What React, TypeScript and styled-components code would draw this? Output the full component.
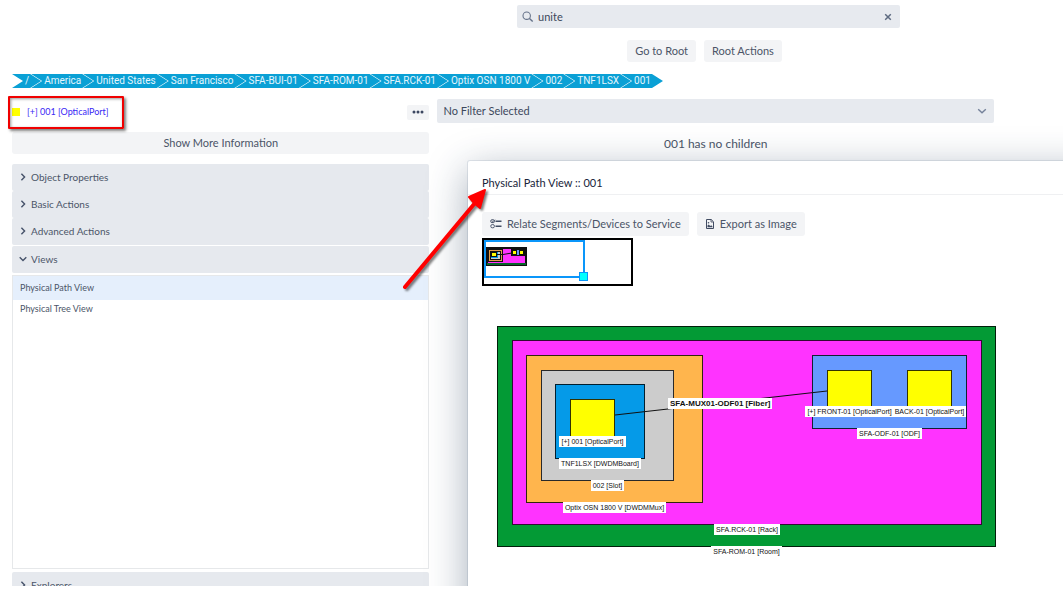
import React from "react";
import styled, { createGlobalStyle } from "styled-components";

const GlobalStyle = createGlobalStyle`
  * { box-sizing: border-box; }
  body {
    margin: 0;
    background: #fff;
    color: #4b5568;
    font-family: Lato, "Noto Sans", sans-serif;
    font-size: 12px;
    line-height: 16px;
  }
  button, input, select { font: inherit; color: inherit; }
  button { border: 0; padding: 0; background: none; cursor: pointer; }
  h2, p, ul, ol { margin: 0; padding: 0; font: inherit; list-style: none; }
`;

const Page = styled.div`
  height: 100vh;
  padding-bottom: 9px;
`;

const Workspace = styled.div`
  position: relative;
  height: 100%;
  overflow: hidden;
`;

const Header = styled.header`
  display: flex;
  flex-direction: column;
  align-items: center;
  gap: 12px;
  padding: 5px 0 0 354px;
`;

const SearchBox = styled.label`
  display: flex;
  align-items: center;
  gap: 4px;
  width: 54%;
  height: 23px;
  padding: 0 7px 0 5px;
  border-radius: 2px;
  background: #e7eaef;
`;

const SearchInput = styled.input`
  flex: 1;
  min-width: 0;
  border: 0;
  padding: 0;
  outline: 0;
  background: none;
  color: #3c485c;
  font-size: 11px;
`;

const IconButton = styled.button`
  display: flex;
  padding: 1px;
`;

const ButtonRow = styled.div`
  display: flex;
  gap: 8px;
`;

const RootActions = styled(ButtonRow)`
  padding-right: 8px;
`;

const Button = styled.button<{ $tall?: boolean }>`
  display: flex;
  align-items: center;
  justify-content: center;
  gap: 5px;
  height: ${(p) => (p.$tall ? 24 : 22)}px;
  padding: 0 8px;
  border-radius: 3px;
  background: #f3f4f6;
  font-size: 11px;
  white-space: nowrap;
`;

const Crumbs = styled.ol`
  display: flex;
  padding: 12px 12px 0;
`;

const Crumb = styled.a`
  display: block;
  height: 14px;
  margin-right: -10px;
  padding: 0 12px 0 13px;
  background: #0aa0d5;
  color: #e4f6fd;
  font-family: Roboto, "Noto Sans", sans-serif;
  font-size: 10px;
  line-height: 14px;
  text-decoration: none;
  white-space: nowrap;
  clip-path: polygon(0 0, calc(100% - 11px) 0, 100% 50%, calc(100% - 11px) 100%, 0 100%, 11px 50%);
`;

const Columns = styled.main`
  display: grid;
  grid-template-columns: 3fr 4fr;
  gap: 8px;
  padding: 11px 69px 0 12px;
`;

const Column = styled.section`
  display: flex;
  flex-direction: column;
  min-width: 0;
`;

const ObjectBar = styled.div`
  position: relative;
  display: flex;
  align-items: center;
  height: 26px;
`;

const Swatch = styled.span`
  width: 8px;
  height: 8px;
  margin-right: 7px;
  background: #ff0;
`;

const ObjectLink = styled.a`
  flex: 1;
  color: #3a28f5;
  font-size: 9px;
  text-decoration: none;
`;

const MoreButton = styled.button`
  display: flex;
  align-items: center;
  justify-content: center;
  width: 22px;
  height: 15px;
  border-radius: 2px;
  background: #f3f4f6;
`;

const Highlight = styled.div`
  position: absolute;
  left: -4px;
  top: -3px;
  width: 116px;
  height: 33px;
  border: 2px solid #f00000;
  border-radius: 1px;
  box-shadow: 2px 2px 3px rgba(0, 0, 0, 0.5), inset 1px 1px 3px rgba(0, 0, 0, 0.4);
  pointer-events: none;
`;

const Info = styled.div`
  padding: 7px 0 10px;
`;

const WideButton = styled(Button)`
  width: 100%;
`;

const Section = styled.button<{ $apart?: boolean }>`
  display: flex;
  align-items: center;
  gap: 4px;
  flex: none;
  height: 27px;
  margin-top: ${(p) => (p.$apart ? 1 : 0)}px;
  padding: 0 7px 1px;
  border-radius: 2px;
  background: #e6e9ee;
  font-size: 10px;
  text-align: left;
`;

const ViewList = styled.ul`
  flex: none;
  min-height: 294px;
  margin: 2px 0 3px;
  border: 1px solid #e6e8ea;
`;

const ViewItem = styled.button<{ $selected?: boolean }>`
  display: block;
  width: 100%;
  height: ${(p) => (p.$selected ? 24 : 18)}px;
  padding: 0 7px;
  background: ${(p) => (p.$selected ? "#e5effc" : "#fff")};
  font-size: 9px;
  text-align: left;
`;

const FilterField = styled.div`
  display: grid;
  align-items: center;
  height: 24px;
  border-radius: 2px;
  background: #e7eaef;
  & > * { grid-area: 1 / 1; }
  & > svg { justify-self: end; margin-right: 7px; pointer-events: none; }
`;

const FilterSelect = styled.select`
  width: 100%;
  height: 24px;
  padding: 0 6px;
  border: 0;
  outline: 0;
  appearance: none;
  background: none;
  color: #3c485c;
  font-size: 11px;
`;

const EmptyNote = styled.p`
  padding-top: 13px;
  text-align: center;
`;

const Dialog = styled.section`
  position: absolute;
  top: 161px;
  right: -60px;
  bottom: -60px;
  left: 468px;
  border-radius: 2px;
  background: #fff;
  box-shadow: 0 0 0 1px rgba(26, 57, 96, 0.1), 0 10px 40px rgba(26, 50, 80, 0.4);
`;

const DialogTitle = styled.h2`
  height: 34px;
  padding: 14px 14px 0;
  border-bottom: 1px solid #eff0f2;
  color: #18243a;
  font-size: 11px;
`;

const DialogBody = styled.div`
  padding: 17px 14px 0;
`;

const Overview = styled.div`
  position: relative;
  width: 151px;
  height: 48px;
  margin-top: 2px;
  padding: 7px 0 0 2px;
  border: 2px solid #000;
  & > svg { display: block; }
`;

const Viewport = styled.div`
  position: absolute;
  left: 0;
  top: 0;
  width: 101px;
  height: 38px;
  border: 2px solid #0a96fa;
  &::after {
    content: "";
    position: absolute;
    right: -5px;
    bottom: -5px;
    width: 7px;
    height: 7px;
    border: 1px solid #0a96fa;
    background: #0ff;
  }
`;

const Canvas = styled.div`
  position: relative;
  height: 290px;
  color: #111;
  font-family: "Liberation Sans", Arial, sans-serif;
  font-size: 7px;
  line-height: 11px;
`;

type Box = { x: number; y: number; w: number; h: number; fill: string; label: string };

const Node = styled.div<{ $box: Box }>`
  position: absolute;
  left: ${(p) => p.$box.x}px;
  top: ${(p) => p.$box.y}px;
  width: ${(p) => p.$box.w}px;
  height: ${(p) => p.$box.h}px;
  border: 1px solid rgba(0, 0, 0, 0.8);
  background: ${(p) => p.$box.fill};
`;

const NodeLabel = styled.div`
  position: absolute;
  top: 100%;
  left: -60px;
  right: -60px;
  display: flex;
  justify-content: center;
  white-space: nowrap;
  & > span { padding: 0 2px; background: #fff; }
`;

const Link = styled.svg`
  position: absolute;
  left: 0;
  top: 0;
`;

const LinkLabel = styled.span`
  position: absolute;
  left: 186px;
  top: 112px;
  padding: 0 2px;
  background: #fff;
  font-size: 8px;
  font-weight: bold;
  white-space: nowrap;
`;

const Arrow = styled.svg`
  position: absolute;
  left: 396px;
  top: 180px;
  filter: drop-shadow(2px 2px 1px rgba(0, 0, 0, 0.5));
  pointer-events: none;
`;

const crumbs = ["/", "America", "United States", "San Francisco", "SFA-BUI-01", "SFA-ROM-01", "SFA.RCK-01", "Optix OSN 1800 V", "002", "TNF1LSX", "001"];

const boxes: Box[] = [
  { x: 15, y: 40, w: 499, h: 221, fill: "#039a35", label: "SFA-ROM-01 [Room]" },
  { x: 30, y: 54, w: 470, h: 185, fill: "#ff33ff", label: "SFA.RCK-01 [Rack]" },
  { x: 44, y: 69, w: 177, h: 148, fill: "#ffb54d", label: "Optix OSN 1800 V [DWDMMux]" },
  { x: 59, y: 84, w: 133, h: 111, fill: "#cccccc", label: "002 [Slot]" },
  { x: 73, y: 98, w: 90, h: 75, fill: "#059ae8", label: "TNF1LSX [DWDMBoard]" },
  { x: 88, y: 113, w: 45, h: 38, fill: "#ffff00", label: "[+] 001 [OpticalPort]" },
  { x: 330, y: 69, w: 155, h: 74, fill: "#6699ff", label: "SFA-ODF-01 [ODF]" },
  { x: 345, y: 84, w: 45, h: 37, fill: "#ffff00", label: "[+] FRONT-01 [OpticalPort]" },
  { x: 425, y: 84, w: 45, h: 37, fill: "#ffff00", label: "BACK-01 [OpticalPort]" },
];

const Chevron = ({ down }: { down?: boolean }) => (
  <svg width="8" height="8" viewBox="0 0 8 8" fill="none" stroke="#46526a" strokeWidth="1.4" aria-hidden="true">
    <path d={down ? "M.7 2.3L4 5.5l3.3-3.2" : "M2.4.7L5.6 4 2.4 7.3"} />
  </svg>
);

const SelectChevron = () => (
  <svg width="10" height="8" viewBox="0 0 10 8" fill="none" stroke="#75829a" strokeWidth="1.4" aria-hidden="true">
    <path d="M1.2 2.2L5 5.8l3.8-3.6" />
  </svg>
);

const SearchIcon = () => (
  <svg width="12" height="12" viewBox="0 0 12 12" fill="none" stroke="#66738a" strokeWidth="1.1" aria-hidden="true">
    <circle cx="4.7" cy="4.7" r="3.7" />
    <path d="M7.5 7.5l3.2 3" strokeWidth="1.5" />
  </svg>
);

const ClearIcon = () => (
  <svg width="8" height="8" viewBox="0 0 8 8" stroke="#5d6a80" strokeWidth="1.5" aria-hidden="true">
    <path d="M1.2 1.2l5.6 5.6M6.8 1.2L1.2 6.8" />
  </svg>
);

const DotsIcon = () => (
  <svg width="12" height="4" viewBox="0 0 12 4" fill="#3b4660" aria-hidden="true">
    <circle cx="2" cy="2" r="1.5" />
    <circle cx="6" cy="2" r="1.5" />
    <circle cx="10" cy="2" r="1.5" />
  </svg>
);

const RelateIcon = () => (
  <svg width="12" height="10" viewBox="0 0 12 10" fill="none" stroke="#414c63" aria-hidden="true">
    <rect x="0.8" y="0.8" width="3.6" height="2.8" rx="1" />
    <rect x="0.8" y="5.6" width="3.6" height="3.2" rx="1.4" strokeWidth="0.9" />
    <path d="M1.8 2.3l1 .6L5 .7" strokeWidth="0.8" />
    <path d="M5.5 2.3h6M5.5 7.3h6" strokeWidth="1.4" />
  </svg>
);

const ImageFileIcon = () => (
  <svg width="10" height="12" viewBox="0 0 10 12" fill="none" stroke="#414c63" aria-hidden="true">
    <path d="M1.5 1.5h4.7l2.3 2.3v6.7h-7z" />
    <path d="M6 1.5V4h2.5" strokeWidth="0.8" />
    <path d="M2.5 9.2V7.6l1.2-1.2 1.5 1.6 1-.7 1.3 1.1v.8z" fill="#414c63" stroke="none" />
    <circle cx="3.5" cy="4.8" r="0.8" fill="#414c63" stroke="none" />
  </svg>
);

const MiniMap = () => (
  <svg width="41" height="19" viewBox="0 0 41 19" aria-hidden="true">
    <rect width="41" height="19" fill="#111" />
    <rect x="1" y="16" width="39" height="2" fill="#06662a" />
    <rect x="2" y="2" width="37" height="14" fill="#f3f" />
    <rect x="2" y="2" width="15" height="13" fill="#111" />
    <rect x="3" y="3" width="13" height="11" fill="#e0a050" />
    <rect x="4" y="4" width="11" height="9" fill="#111" />
    <rect x="5" y="5" width="9" height="7" fill="#ccc" />
    <rect x="5" y="5" width="7" height="6" fill="#059ae8" />
    <rect x="5" y="5" width="6" height="5" fill="#111" />
    <rect x="6" y="6" width="4" height="3" fill="#ff0" />
    <path d="M10 7.500h7l9-1.500" stroke="#111" fill="none" />
    <rect x="25" y="2" width="14" height="7" fill="#111" />
    <rect x="26" y="3" width="12" height="5" fill="#69f" />
    <rect x="26" y="3" width="5" height="5" fill="#111" />
    <rect x="33" y="3" width="5" height="5" fill="#111" />
    <rect x="27" y="4" width="3" height="3" fill="#ff0" />
    <rect x="34" y="4" width="3" height="3" fill="#ff0" />
  </svg>
);

export default function App() {
  return (
    <Page>
      <GlobalStyle />
      <Workspace>
        <Header>
          <SearchBox>
            <SearchIcon />
            <SearchInput aria-label="Search" defaultValue="unite" />
            <IconButton aria-label="Clear search"><ClearIcon /></IconButton>
          </SearchBox>
          <RootActions>
            <Button>Go to Root</Button>
            <Button>Root Actions</Button>
          </RootActions>
        </Header>

        <nav aria-label="Location">
          <Crumbs>
            {crumbs.map((name) => (
              <li key={name}><Crumb href="#">{name}</Crumb></li>
            ))}
          </Crumbs>
        </nav>

        <Columns>
          <Column>
            <ObjectBar>
              <Swatch />
              <ObjectLink href="#">[+] 001 [OpticalPort]</ObjectLink>
              <MoreButton aria-label="More actions"><DotsIcon /></MoreButton>
              <Highlight />
            </ObjectBar>
            <Info><WideButton>Show More Information</WideButton></Info>
            <Section aria-expanded={false}><Chevron />Object Properties</Section>
            <Section aria-expanded={false}><Chevron />Basic Actions</Section>
            <Section aria-expanded={false}><Chevron />Advanced Actions</Section>
            <Section aria-expanded $apart><Chevron down />Views</Section>
            <ViewList>
              <li><ViewItem $selected>Physical Path View</ViewItem></li>
              <li><ViewItem>Physical Tree View</ViewItem></li>
            </ViewList>
            <Section aria-expanded={false}><Chevron />Explorers</Section>
          </Column>

          <Column>
            <FilterField>
              <FilterSelect aria-label="Filter">
                <option>No Filter Selected</option>
              </FilterSelect>
              <SelectChevron />
            </FilterField>
            <EmptyNote>001 has no children</EmptyNote>
          </Column>
        </Columns>

        <Dialog role="dialog" aria-labelledby="view-title">
          <DialogTitle id="view-title">Physical Path View :: 001</DialogTitle>
          <DialogBody>
            <ButtonRow>
              <Button $tall><RelateIcon />Relate Segments/Devices to Service</Button>
              <Button $tall><ImageFileIcon />Export as Image</Button>
            </ButtonRow>
            <Overview>
              <MiniMap />
              <Viewport />
            </Overview>
            <Canvas>
              {boxes.map((box) => (
                <Node key={box.label} $box={box}>
                  <NodeLabel><span>{box.label}</span></NodeLabel>
                </Node>
              ))}
              <Link width="520" height="270" aria-hidden="true">
                <path d="M133 129L345 105" stroke="#111" strokeWidth="1" />
              </Link>
              <LinkLabel>SFA-MUX01-ODF01 [Fiber]</LinkLabel>
            </Canvas>
          </DialogBody>
        </Dialog>

        <Arrow width="96" height="114" viewBox="0 0 96 114" aria-hidden="true">
          <path d="M9 107L79 23" stroke="#f00" strokeWidth="4" strokeLinecap="round" />
          <path d="M89 10L84 28 78 23 73 17z" fill="#f00" stroke="#f00" strokeWidth="2" strokeLinejoin="round" />
        </Arrow>
      </Workspace>
    </Page>
  );
}
